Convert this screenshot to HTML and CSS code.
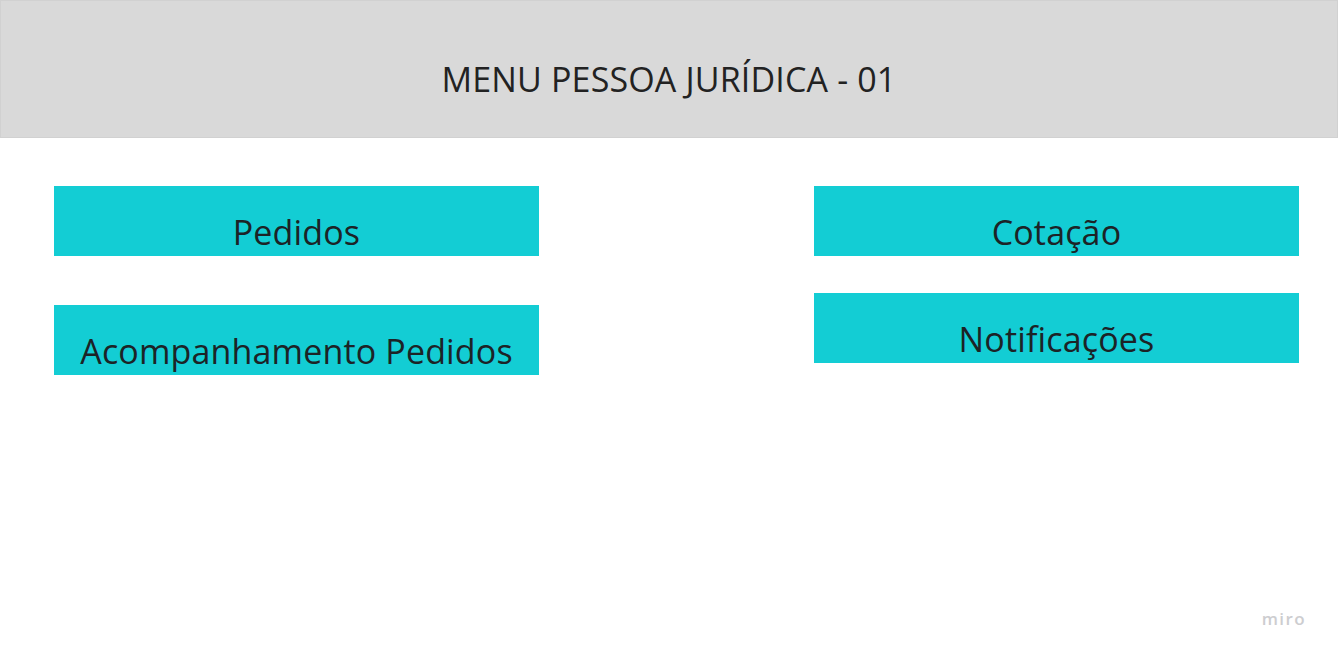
FILE: index.html
```html
<!DOCTYPE html>
<html lang="pt">
<head>
<meta charset="utf-8">
<title>Menu Pessoa Jurídica - 01</title>
<link rel="stylesheet" href="styles.css">
</head>
<body>
<header class="topbar">
  <h1 class="title">MENU PESSOA JURÍDICA - 01</h1>
</header>
<main class="menu">
  <div class="col col-left">
    <div class="item">Pedidos</div>
    <div class="item">Acompanhamento Pedidos</div>
  </div>
  <div class="col col-right">
    <div class="item">Cotação</div>
    <div class="item">Notificações</div>
  </div>
</main>
<div class="watermark">miro</div>
</body>
</html>
```
FILE: styles.css
```css
html, body {
  margin: 0;
  padding: 0;
  background: #ffffff;
  font-family: "Open Sans", "DejaVu Sans", sans-serif;
  width: 1338px;
  height: 656px;
  overflow: hidden;
}
body {
  position: relative;
}
.topbar {
  box-sizing: border-box;
  height: 138px;
  background: #d9d9d9;
  border: 1px solid #d1d1d1;
  display: flex;
  justify-content: center;
  padding-top: 56px;
}
.title {
  margin: 0;
  font-weight: 400;
  font-size: 34px;
  line-height: 45px;
  color: #222222;
  letter-spacing: 0.15px;
}
.menu {
  display: grid;
  grid-template-columns: 485px 485px;
  column-gap: 275px;
  padding: 48px 0 0 54px;
  align-items: start;
}
.col {
  display: flex;
  flex-direction: column;
}
.col-left { gap: 49px; }
.col-right { gap: 37px; }
.item {
  box-sizing: border-box;
  height: 70px;
  background: #13cdd4;
  color: #1c2326;
  font-size: 34px;
  line-height: 45px;
  text-align: center;
  letter-spacing: 0.15px;
  padding-top: 24px;
}
.watermark {
  position: absolute;
  right: 32px;
  bottom: 26px;
  font-size: 17px;
  font-weight: 600;
  color: #cdcdd0;
  letter-spacing: 1.4px;
}
```
